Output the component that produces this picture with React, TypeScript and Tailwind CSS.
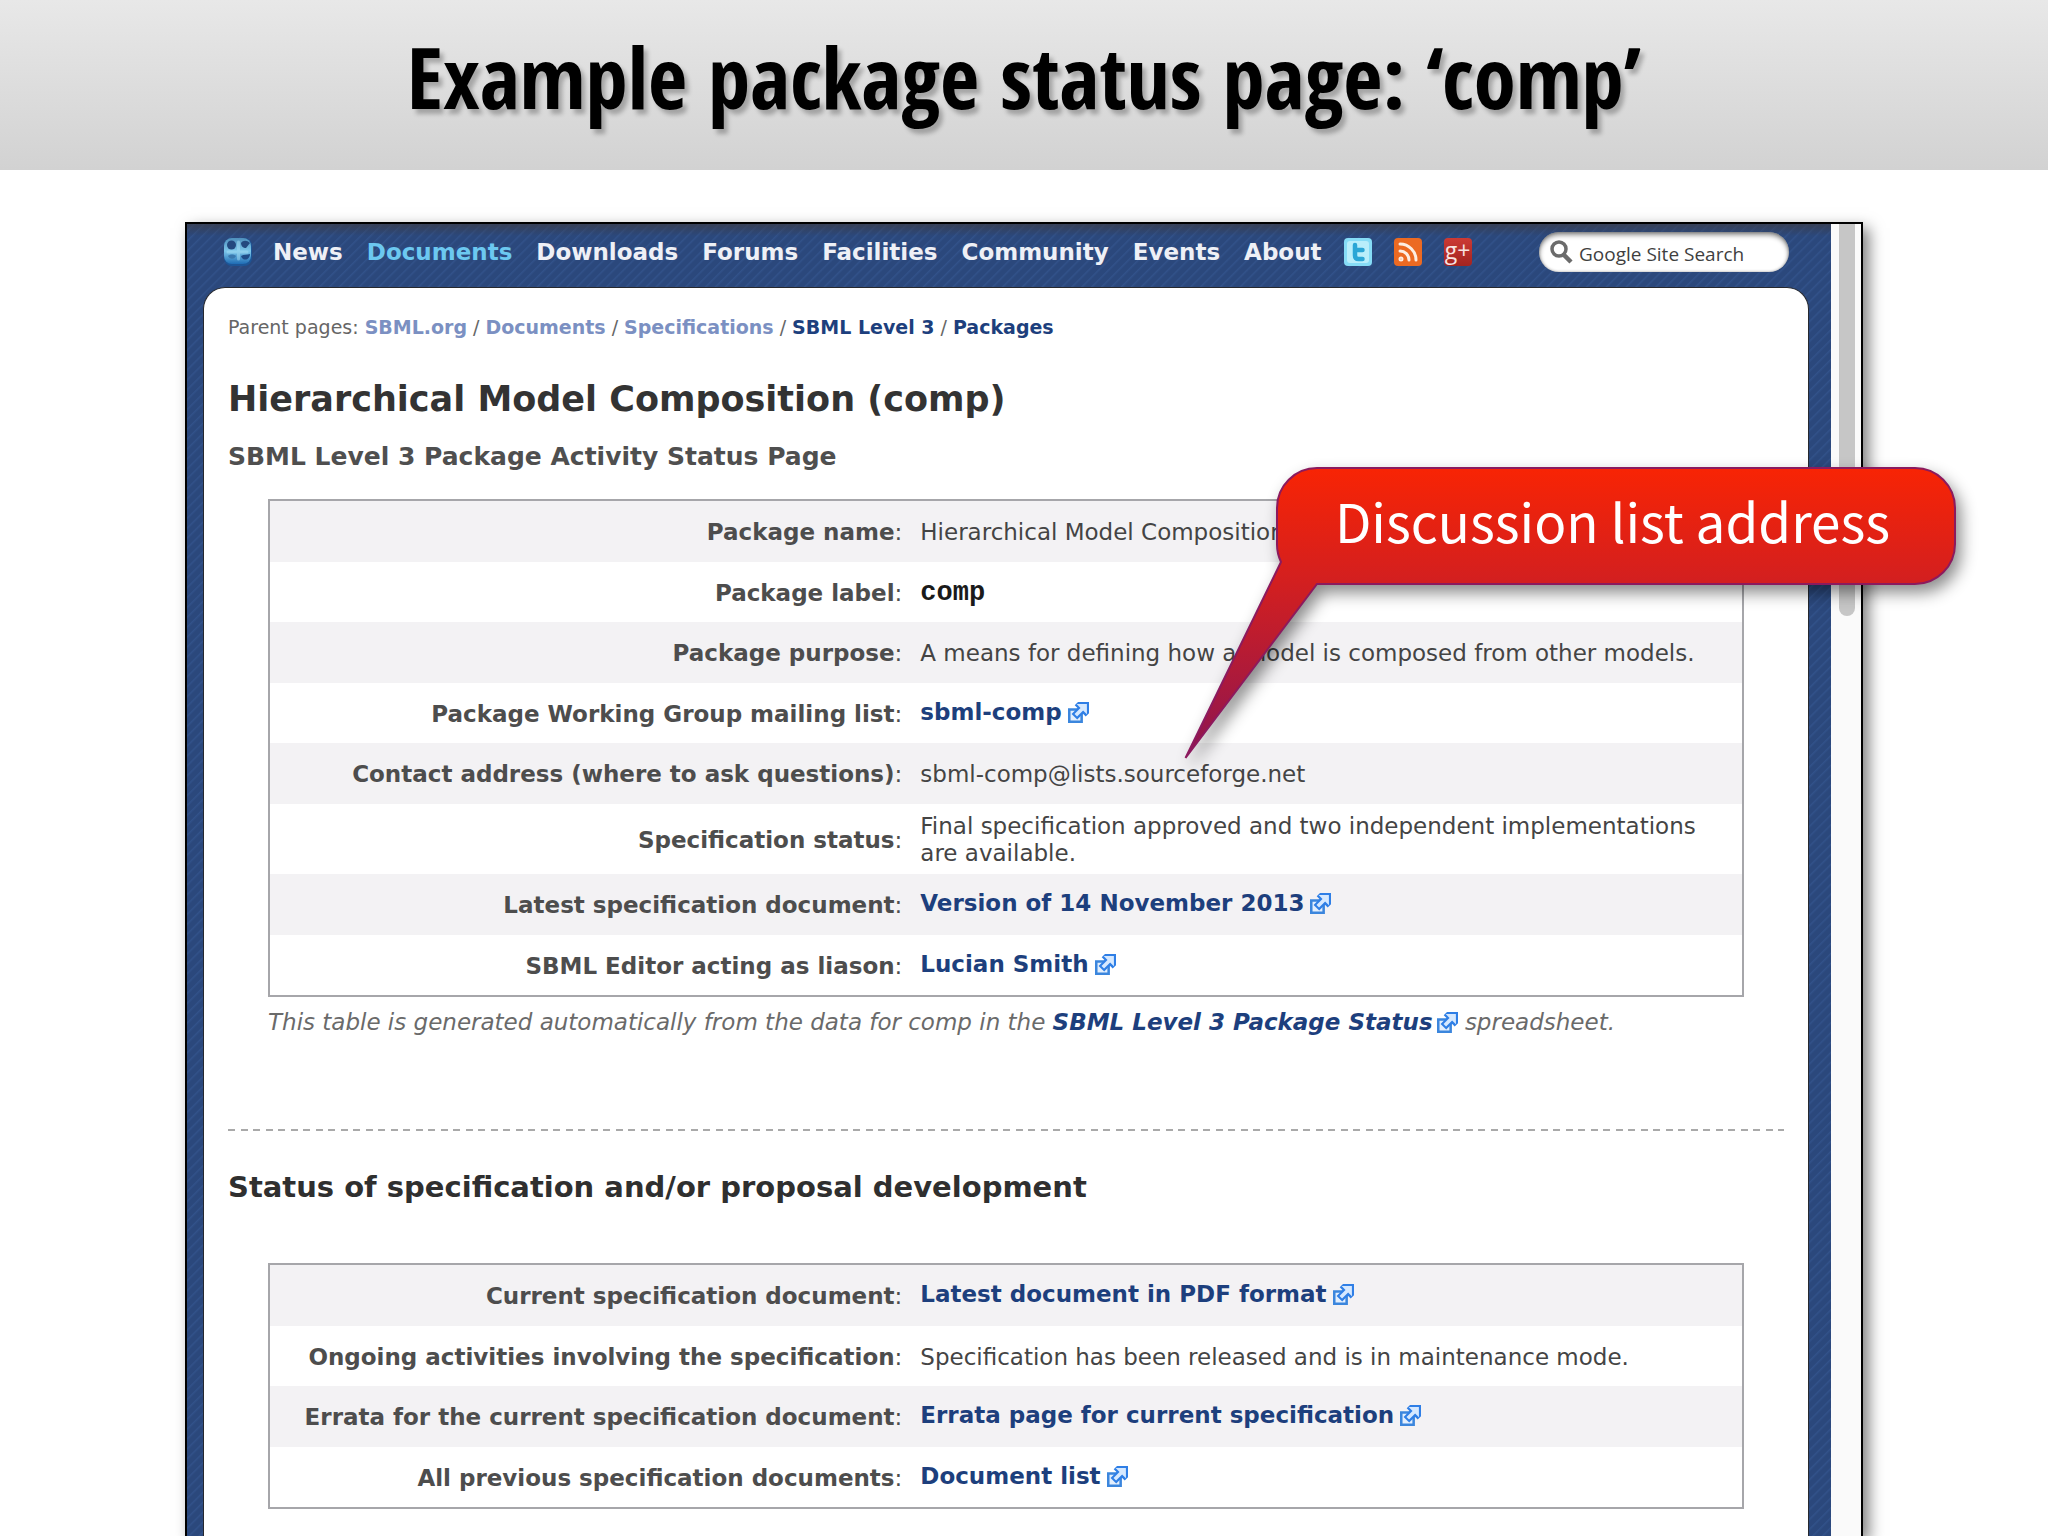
import type { ReactNode } from "react";
import { Rss } from "lucide-react";

type Row = { label: string; value: ReactNode };

const navItems = ["News", "Documents", "Downloads", "Forums", "Facilities", "Community", "Events", "About"];

const crumbs = [
  { label: "SBML.org", visited: true },
  { label: "Documents", visited: true },
  { label: "Specifications", visited: true },
  { label: "SBML Level 3", visited: false },
  { label: "Packages", visited: false },
];

const packageRows: Row[] = [
  { label: "Package name", value: "Hierarchical Model Composition" },
  {
    label: "Package label",
    value: <code className="font-['Liberation_Mono',monospace] text-[27px] font-bold text-[#1a1a1a]">comp</code>,
  },
  { label: "Package purpose", value: "A means for defining how a model is composed from other models." },
  { label: "Package Working Group mailing list", value: <ExternalLink>sbml-comp</ExternalLink> },
  { label: "Contact address (where to ask questions)", value: "sbml-comp@lists.sourceforge.net" },
  {
    label: "Specification status",
    value: "Final specification approved and two independent implementations are available.",
  },
  { label: "Latest specification document", value: <ExternalLink>Version of 14 November 2013</ExternalLink> },
  { label: "SBML Editor acting as liason", value: <ExternalLink>Lucian Smith</ExternalLink> },
];

const specRows: Row[] = [
  { label: "Current specification document", value: <ExternalLink>Latest document in PDF format</ExternalLink> },
  {
    label: "Ongoing activities involving the specification",
    value: "Specification has been released and is in maintenance mode.",
  },
  {
    label: "Errata for the current specification document",
    value: <ExternalLink>Errata page for current specification</ExternalLink>,
  },
  { label: "All previous specification documents", value: <ExternalLink>Document list</ExternalLink> },
];

function ExternalLink({ children }: { children: ReactNode }) {
  return (
    <a href="#" className="inline-flex items-center gap-1.5 pb-1 font-bold text-[#1d3f7d]">
      {children}
      <ExternalIcon />
    </a>
  );
}

function ExternalIcon() {
  return (
    <svg viewBox="1 1 10 10" className="inline-block size-[21px] shrink-0" aria-hidden="true">
      <path fill="#e3effd" stroke="#3b86dd" strokeWidth="1.2" d="M1.6 4.6h5.9v5.8H1.6z" />
      <path
        fill="#2f7fe6"
        d="M5.765 1H11v5.39L9.427 7.937l-1.31-1.31L5.393 9.35l-2.69-2.688 2.81-2.808L4.2 2.544z"
      />
      <path fill="#d6e9ff" d="m9.995 2.004.022 4.885L8.2 5.07 5.32 7.95 4.09 6.723l2.882-2.88-1.85-1.852z" />
    </svg>
  );
}

function SiteLogo() {
  return (
    <svg viewBox="0 0 30 30" className="size-[30px]" aria-hidden="true">
      <defs>
        <linearGradient id="logo" x1="0" y1="0" x2="0" y2="1">
          <stop offset="0" stopColor="#4f8fbc" />
          <stop offset="0.5" stopColor="#7cc6ea" />
          <stop offset="1" stopColor="#1f6cb4" />
        </linearGradient>
      </defs>
      <rect x="1" y="1" width="28" height="28" rx="8" fill="#1d5596" />
      <rect x="1" y="1" width="27" height="26" rx="8" fill="url(#logo)" />
      <circle cx="8.5" cy="8" r="4.5" fill="#24497f" />
      <path d="M18 6c2-3 6-3 9 0l-4 5c-3 0-5-2-5-5z" fill="#24497f" />
      <path d="M5 19c2-2 6-2 8 0-1 3-6 4-8 0z" fill="#3a78ae" />
      <path d="M18 19c3-2 6-1 9-2 0 6-7 8-9 2z" fill="#1f4c88" />
      <path d="M5 15h19M15.5 5v17" stroke="#a6def5" strokeWidth="3" strokeLinecap="round" opacity="0.5" />
    </svg>
  );
}

function SocialLinks() {
  return (
    <div className="flex items-center gap-[22px]">
      <a href="#" aria-label="Twitter">
        <svg viewBox="0 0 28 28" className="size-7">
          <rect width="28" height="28" rx="4" fill="#86dcf6" />
          <rect x="3" y="3" width="22" height="22" rx="3" fill="#b9eefb" />
          <path
            d="M11 7v10.5q0 3.5 3.5 3.5h4M11 12h7.5"
            fill="none"
            stroke="#2ba6d6"
            strokeWidth="4.5"
            strokeLinecap="round"
            strokeLinejoin="round"
          />
        </svg>
      </a>
      <a href="#" aria-label="RSS" className="flex size-7 items-center justify-center rounded bg-[#ec6a22]">
        <Rss className="size-6 text-[#fdeee2]" strokeWidth={3} />
      </a>
      <a
        href="#"
        className="flex size-7 items-center justify-center rounded bg-linear-to-b from-[#cc3a34] to-[#a32420] pb-1 font-['Open_Sans',sans-serif] text-[23px] leading-6 text-[#f8e4e2]"
      >
        g+
      </a>
    </div>
  );
}

function SearchBox() {
  return (
    <label className="ml-auto flex h-10 w-[250px] items-center gap-1.5 rounded-full bg-white pl-2.5 shadow-[inset_0_3px_5px_rgba(0,0,0,0.45),inset_0_0_3px_rgba(0,0,0,0.3)]">
      <svg viewBox="0 0 24 24" className="size-6 shrink-0" fill="none" stroke="#6b6b6b" aria-hidden="true">
        <circle cx="10" cy="9" r="7" strokeWidth="3.5" />
        <path d="m15 15 7 7" strokeWidth="4.5" />
      </svg>
      <input
        type="text"
        aria-label="Google Site Search"
        placeholder="Google Site Search"
        className="w-full min-w-0 bg-transparent pt-1 font-['Open_Sans',sans-serif] text-[19px] leading-6 outline-none placeholder:text-[#3f3f3f] placeholder:opacity-100"
      />
    </label>
  );
}

function StatusTable({ rows, className }: { rows: Row[]; className: string }) {
  return (
    <div className={className}>
      <table className="w-full table-fixed border-separate border-spacing-0 border-2 border-[#a6a6aa] text-[23px] leading-[27px]">
        <tbody>
          {rows.map((row) => (
            <tr key={row.label} className="odd:h-[61px] odd:bg-[#f3f2f4] even:h-[60px] even:bg-white">
              <th scope="row" className="w-[43.5%] pt-0.5 pr-2 text-right font-bold text-[#4d4d4d]">
                {row.label}
                <span className="font-normal">:</span>
              </th>
              <td className="pt-[9px] pr-5 pb-[7px] pl-2.5 text-[#444]">{row.value}</td>
            </tr>
          ))}
        </tbody>
      </table>
    </div>
  );
}

function Callout() {
  return (
    <div className="absolute top-[243px] -right-[95px] w-[774px]">
      <svg
        viewBox="0 0 774 294"
        className="w-full overflow-visible drop-shadow-[5px_8px_8px_rgba(0,0,0,0.45)]"
        aria-hidden="true"
      >
        <defs>
          <linearGradient id="callout" x1="0" y1="0" x2="0" y2="1">
            <stop offset="0" stopColor="#f82404" />
            <stop offset="0.4" stopColor="#d21f20" />
            <stop offset="1" stopColor="#8c1552" />
          </linearGradient>
        </defs>
        <path
          d="M99 95A40 40 0 0 1 95 77V41A40 40 0 0 1 135 1H733A40 40 0 0 1 773 41V77A40 40 0 0 1 733 117H135L3.5 291Z"
          fill="url(#callout)"
          stroke="#8c1a5e"
          strokeWidth="2"
        />
      </svg>
      <p className="absolute top-0 right-2 left-[95px] text-center font-['Noto_Sans_CJK_SC',sans-serif] text-[53px] leading-[106px] text-white">
        Discussion list address
      </p>
    </div>
  );
}

export default function App() {
  return (
    <div className="flex min-h-screen flex-col bg-white font-['DejaVu_Sans',sans-serif]">
      <header className="flex h-[170px] items-center justify-center bg-linear-to-b from-[#e8e8e8] to-[#d2d2d2] pb-4">
        <h1 className="font-['Open_Sans_Condensed','Open_Sans',sans-serif] text-[85px] font-bold text-black [text-shadow:4px_5px_4px_rgba(0,0,0,0.25)]">
          Example package status page: ‘comp’
        </h1>
      </header>

      <main className="relative mx-[185px] mt-[52px] flex flex-1 border-2 border-b-0 border-black shadow-[6px_6px_14px_rgba(0,0,0,0.5)]">
        <div className="flex flex-1 flex-col bg-[linear-gradient(to_bottom,rgba(60,60,70,0.7),transparent_12px),repeating-linear-gradient(135deg,#2b487c_0px,#2b487c_4px,#32528a_5px,#2b487c_7px)]">
          <nav className="mb-[7px] flex h-14 items-center pr-[42px] pl-9">
            <a href="#" aria-label="SBML home" className="mr-5">
              <SiteLogo />
            </a>
            <ul className="mr-[22px] flex gap-6 text-[23px] font-bold text-[#eef0f6]">
              {navItems.map((item) => (
                <li key={item}>
                  <a href="#" className={item === "Documents" ? "text-[#6cc8f0]" : ""}>
                    {item}
                  </a>
                </li>
              ))}
            </ul>
            <SocialLinks />
            <SearchBox />
          </nav>

          <article className="mr-[22px] ml-4 flex-1 rounded-t-[22px] border border-b-0 border-[#26282e] bg-white px-6 pt-[27px]">
            <ol className="flex gap-1.5 text-[19px] leading-6 text-[#666]">
              <li>Parent pages:</li>
              {crumbs.map((crumb, i) => (
                <li key={crumb.label} className="flex gap-1.5">
                  {i > 0 && <span>/</span>}
                  <a href="#" className={crumb.visited ? "font-bold text-[#7b90c2]" : "font-bold text-[#1d3f7d]"}>
                    {crumb.label}
                  </a>
                </li>
              ))}
            </ol>

            <h2 className="mt-10 text-[35px] leading-10 font-bold text-[#333]">
              Hierarchical Model Composition (comp)
            </h2>
            <p className="mt-[22px] text-[25px] leading-8 font-bold text-[#4f4f4f]">
              SBML Level 3 Package Activity Status Page
            </p>

            <StatusTable rows={packageRows} className="mx-10 mt-[26px]" />
            <p className="mx-10 mt-3 text-[23px] leading-[27px] text-[#6a6a6a] italic">
              This table is generated automatically from the data for comp in the{" "}
              <a href="#" className="inline-flex items-center gap-1 font-bold text-[#1d3f7d]">
                SBML Level 3 Package Status
                <ExternalIcon />
              </a>{" "}
              spreadsheet.
            </p>

            <div
              role="separator"
              className="mt-[93px] h-0.5 bg-[repeating-linear-gradient(to_right,#a9a9a9_0px,#a9a9a9_7px,transparent_7px,transparent_13px,#a9a9a9_13px,#a9a9a9_20px,transparent_20px,transparent_25px)]"
            />

            <h3 className="mt-[38px] text-[29px] leading-9 font-bold text-[#2f2f2f]">
              Status of specification and/or proposal development
            </h3>
            <StatusTable rows={specRows} className="mx-10 mt-[58px]" />
          </article>
        </div>

        {/* scrollbar gutter */}
        <div className="w-[30px] bg-[#fafafa] pl-2">
          <div className="h-[392px] w-4 rounded-b-full bg-[#c6c6c6]" />
        </div>

        <Callout />
      </main>
    </div>
  );
}
